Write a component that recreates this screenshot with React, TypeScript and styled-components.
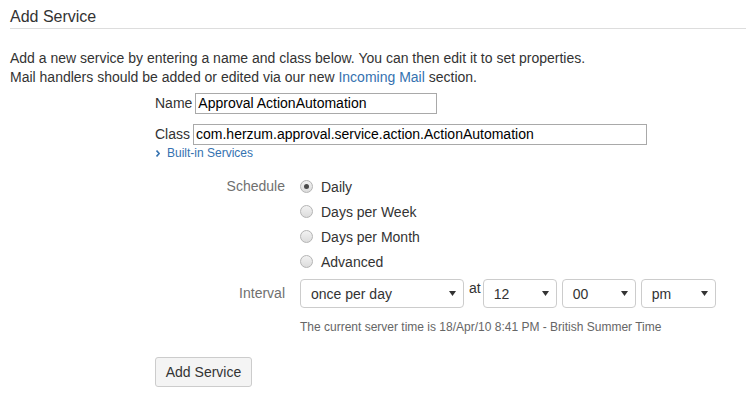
import React from 'react';
import styled, { createGlobalStyle } from 'styled-components';

const GlobalStyle = createGlobalStyle`
	* {
		box-sizing: border-box;
	}
	body {
		margin: 0;
		background: #fff;
		font-family: 'Liberation Sans', Arial, sans-serif;
		font-size: 14px;
		color: #333;
	}
`;

const Page = styled.div`
	padding-left: 10px;
	width: 746px;
	height: 398px;
	overflow: hidden;
`;

const Title = styled.h2`
	margin: 0;
	padding: 7px 0 1px;
	font-size: 16px;
	font-weight: 400;
	line-height: 20px;
	color: #333;
	border-bottom: 1px solid #ddd;
`;

const Intro = styled.p`
	margin: 20px 0 0;
	line-height: 19px;
`;

const Link = styled.a`
	color: #3572b0;
	text-decoration: none;
`;

const Form = styled.div`
	padding-left: 145px;
`;

const InlineField = styled.div<{ $top: number }>`
	display: flex;
	align-items: center;
	gap: 3px;
	margin-top: ${p => p.$top}px;
	line-height: 21px;
`;

const TextInput = styled.input<{ $width: number }>`
	width: ${p => p.$width}px;
	height: 21px;
	padding: 0 2px;
	border: 1px solid #a9a9a9;
	border-radius: 0;
	font: inherit;
	font-size: 14px;
	color: #000;
	outline: none;
`;

const BuiltIn = styled(Link)`
	display: flex;
	align-items: center;
	gap: 7px;
	font-size: 12px;
	line-height: 16px;
	padding-left: 1px;
`;

const Grid = styled.div<{ $top: number }>`
	display: grid;
	grid-template-columns: 130px 1fr;
	column-gap: 15px;
	margin-top: ${p => p.$top}px;
`;

const FieldLabel = styled.div<{ $height: number }>`
	text-align: right;
	color: #707070;
	line-height: ${p => p.$height}px;
`;

const RadioList = styled.div`
	display: flex;
	flex-direction: column;
`;

const RadioRow = styled.label`
	display: flex;
	align-items: center;
	gap: 8px;
	height: 25px;
	margin-top: -1px;
	margin-bottom: 1px;
`;

const RadioDot = styled.span<{ $checked?: boolean }>`
	position: relative;
	width: 13px;
	height: 13px;
	border-radius: 50%;
	border: 1px solid #b4b4b4;
	background: linear-gradient(#f2f2f2, #dcdcdc);
	&::after {
		content: '';
		display: ${p => (p.$checked ? 'block' : 'none')};
		position: absolute;
		left: 3px;
		top: 3px;
		width: 5px;
		height: 5px;
		border-radius: 50%;
		background: #4a4a4a;
	}
`;

const IntervalRow = styled.div`
	display: flex;
	align-items: flex-start;
	gap: 5px;
`;

const Select = styled.div<{ $width: number }>`
	display: flex;
	align-items: center;
	justify-content: space-between;
	width: ${p => p.$width}px;
	height: 29px;
	padding: 0 7px 0 10px;
	border: 1px solid #ccc;
	border-radius: 4px;
	background: #fff;
	color: #333;
`;

const At = styled.span`
	margin-right: -3px;
	line-height: 18px;
	color: #333;
`;

const Help = styled.div`
	margin-top: 11px;
	font-size: 12px;
	line-height: 16px;
	color: #666;
`;

const Button = styled.button`
	margin-top: 22px;
	width: 97px;
	height: 30px;
	border: 1px solid #ccc;
	border-radius: 3px;
	background: #f4f4f4;
	font: inherit;
	font-size: 14px;
	color: #333;
`;

const Arrow = () => (
	<svg width="7" height="5" viewBox="0 0 7 5">
		<path d="M0 0h7L3.5 5z" fill="#333" />
	</svg>
);

const Chevron = () => (
	<svg width="4" height="7" viewBox="0 0 4 7">
		<path d="M0.5 0.5L3.2 3.5L0.5 6.5" stroke="#3572b0" strokeWidth="1.6" fill="none" />
	</svg>
);

const schedules = ['Daily', 'Days per Week', 'Days per Month', 'Advanced'];

const selects = [
	{ value: 'once per day', width: 164 },
	{ value: '12', width: 74 },
	{ value: '00', width: 74 },
	{ value: 'pm', width: 75 },
];

export default function App() {
	return (
		<Page>
			<GlobalStyle />
			<Title>Add Service</Title>
			<Intro>
				Add a new service by entering a name and class below. You can then edit it to set properties.
				<br />
				Mail handlers should be added or edited via our new <Link href="#">Incoming Mail</Link> section.
			</Intro>
			<Form>
				<InlineField $top={6}>
					<span>Name</span>
					<TextInput $width={242} defaultValue="Approval ActionAutomation" />
				</InlineField>
				<InlineField $top={10}>
					<span>Class</span>
					<TextInput $width={454} defaultValue="com.herzum.approval.service.action.ActionAutomation" />
				</InlineField>
				<BuiltIn href="#">
					<Chevron />
					Built-in Services
				</BuiltIn>
				<Grid $top={14}>
					<FieldLabel $height={23}>Schedule</FieldLabel>
					<RadioList>
						{schedules.map((s, i) => (
							<RadioRow key={s}>
								<RadioDot $checked={i === 0} />
								{s}
							</RadioRow>
						))}
					</RadioList>
				</Grid>
				<Grid $top={4}>
					<FieldLabel $height={29}>Interval</FieldLabel>
					<div>
						<IntervalRow>
							{selects.map((s, i) => (
								<React.Fragment key={s.value}>
									<Select $width={s.width}>
										{s.value}
										<Arrow />
									</Select>
									{i === 0 && <At>at</At>}
								</React.Fragment>
							))}
						</IntervalRow>
						<Help>The current server time is 18/Apr/10 8:41 PM - British Summer Time</Help>
					</div>
				</Grid>
				<Button>Add Service</Button>
			</Form>
		</Page>
	);
}
